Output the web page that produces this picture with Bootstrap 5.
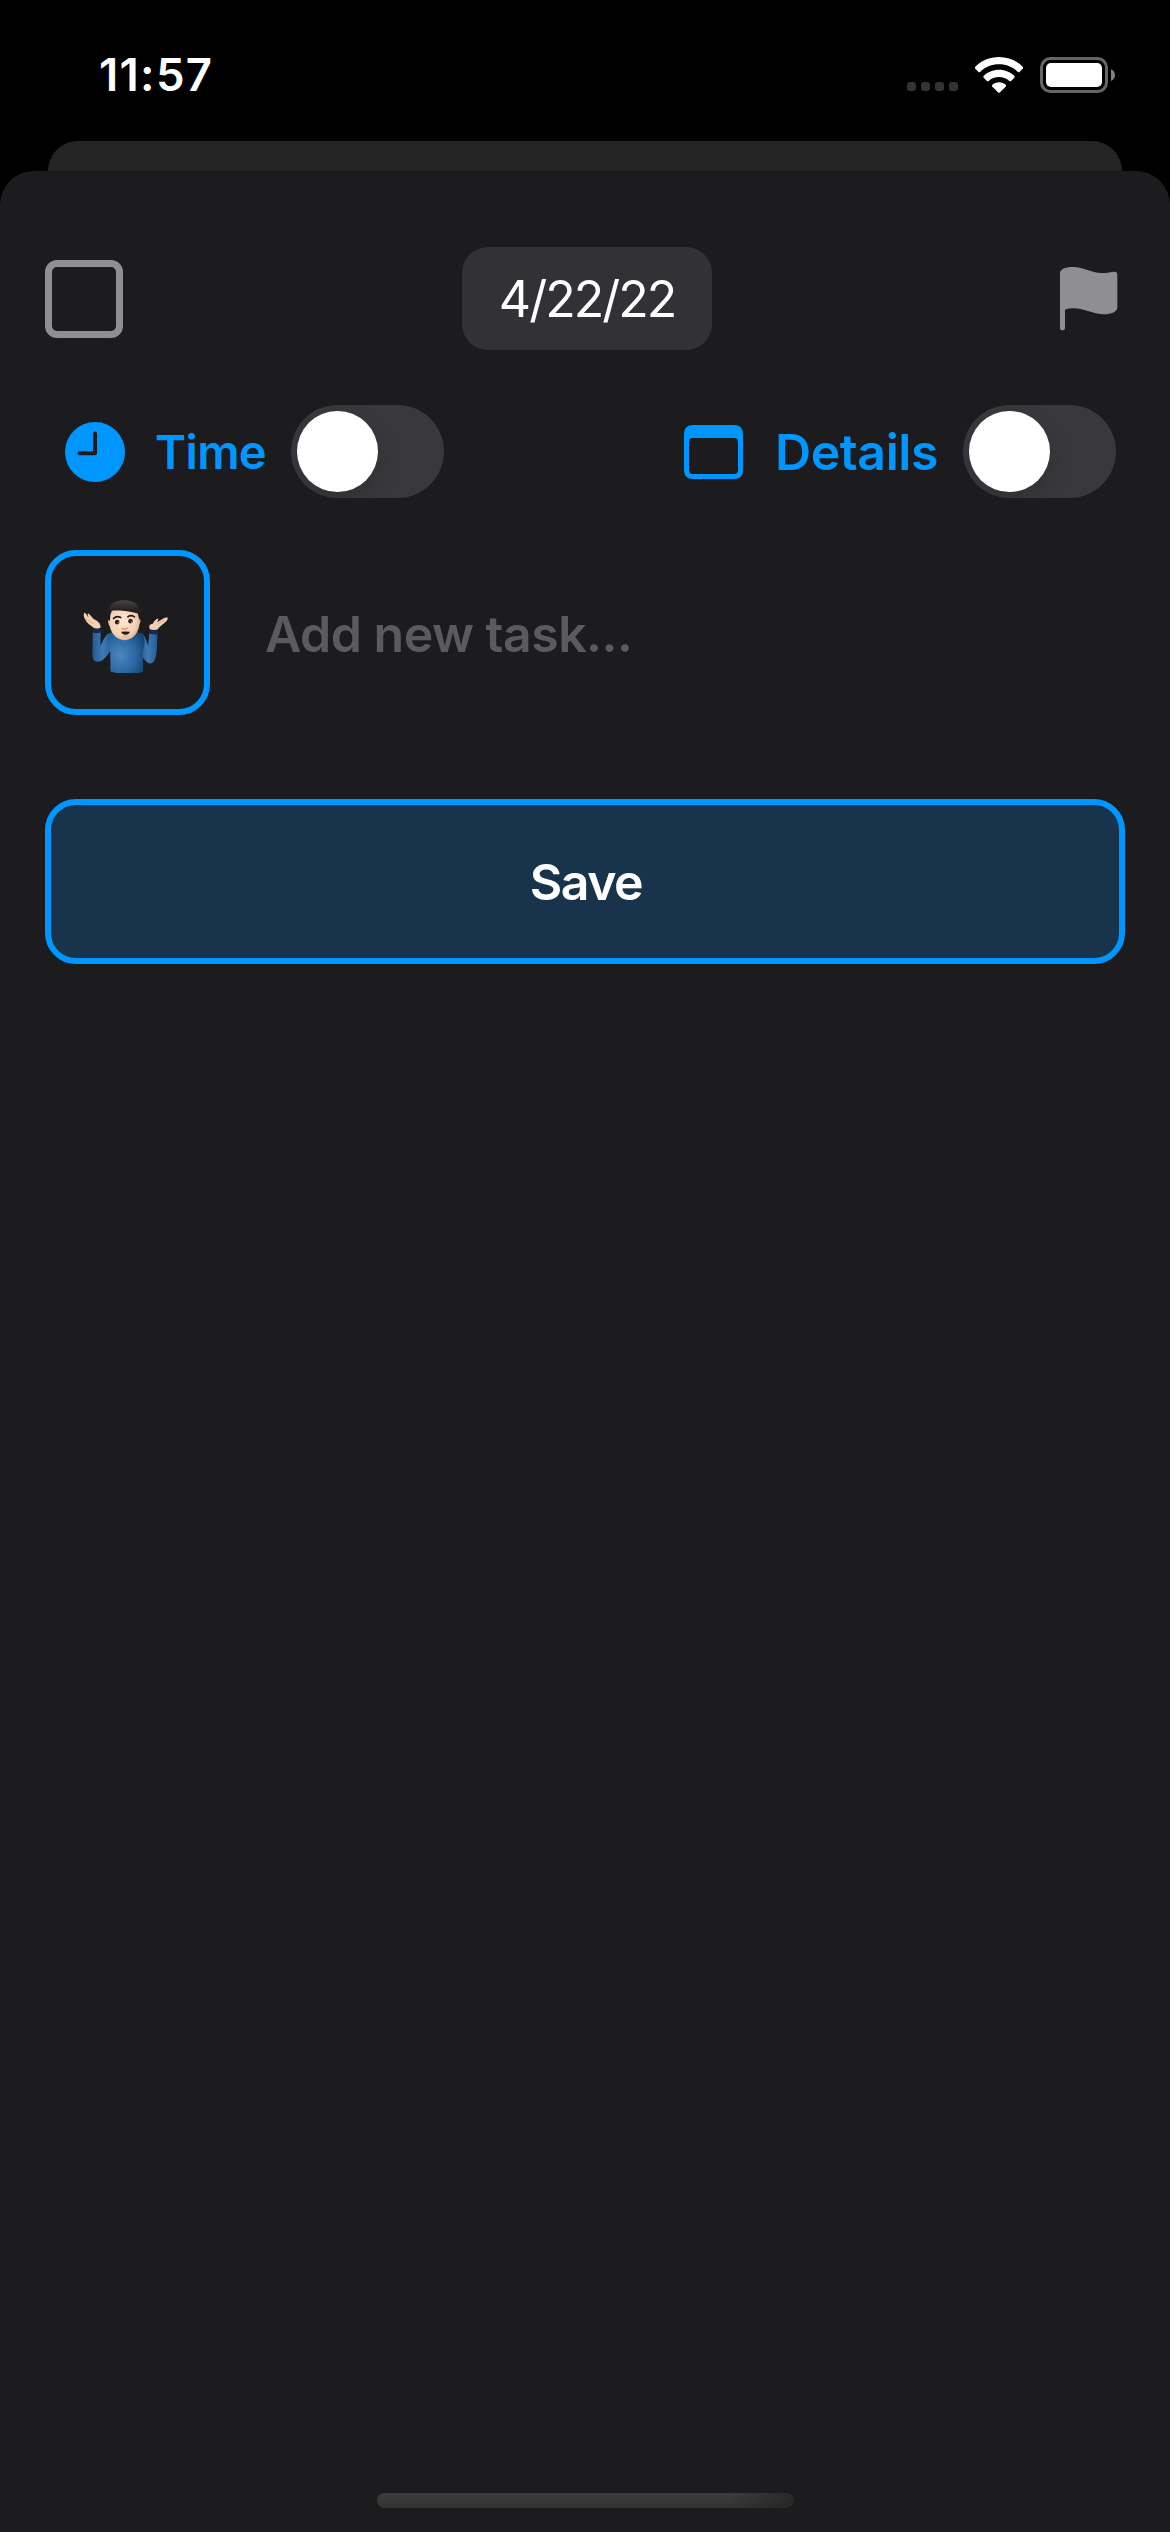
<!DOCTYPE html>
<html lang="en" data-bs-theme="dark">
<head>
<meta charset="utf-8">
<meta name="viewport" content="width=device-width, initial-scale=1">
<title>New task</title>
<link href="https://cdn.jsdelivr.net/npm/bootstrap@5.3.0/dist/css/bootstrap.min.css" rel="stylesheet">
<style>
  :root { --accent: #0096ff; --sheet: #1c1c1e; }
  body { height: 2532px; background: #000; color: #fff; font-family: Inter, "Liberation Sans", sans-serif; line-height: 1; overflow: hidden; }
  svg { display: block; flex: none; }
  .status-bar { height: 141px; padding: 8px 55px 0 99px; }
  .status-time { font-size: 45.5px; font-weight: 600; letter-spacing: 1.3px; }
  .signal-dot { width: 9px; height: 9px; border-radius: 3px; background: #333; }
  .signal { gap: 5px; margin: 24px 17px 0 0; }
  .back-sheet { height: 30px; margin: 0 48px; background: #242424; border-radius: 30px 30px 0 0; }
  .task-sheet { background: var(--sheet); border-radius: 34px 34px 0 0; padding: 76px 45px 24px; }
  .task-check { width: 78px; height: 78px; border: 7px solid #8e8e93; border-radius: 12px; background: none; }
  .date-pill { width: 250px; height: 103px; border-radius: 26px; background: #323236; font-size: 50px; letter-spacing: -2px; }
  .option-row { height: 93px; margin-top: 55px; padding: 0 9px 0 20px; color: var(--accent); font-weight: 600; }
  .time-text { font-size: 47px; margin-left: 30px; width: 136px; letter-spacing: -.6px; }
  .details-text { font-size: 50px; margin-left: 31px; width: 188px; letter-spacing: -.4px; }
  .toggle-track { width: 153px; height: 93px; padding: 6px; border-radius: 47px; background: #39393d; overflow: hidden; }
  .toggle-knob { width: 81px; height: 81px; border-radius: 50%; background: #fff; box-shadow: 0 9px 24px rgba(0,0,0,.15); }
  .entry-row { height: 165px; margin-top: 52px; }
  .emoji-box { width: 165px; height: 165px; border: 6px solid var(--accent); border-radius: 31px; }
  .task-input, .task-input:focus { background: none; border: 0; box-shadow: none; padding: 2px 0 0 55px; font-size: 50px; font-weight: 600; letter-spacing: -.5px; height: 100px; }
  .task-input::placeholder { color: #5b5b5f; opacity: 1; }
  .save-btn, .save-btn:hover { height: 165px; margin-top: 84px; padding: 0 0 0 2px; border: 6px solid var(--accent); border-radius: 31px; background: #17344c; color: #fff; font-size: 50px; font-weight: 600; letter-spacing: -1.5px; line-height: 1; }
  .home-bar { width: 417px; height: 15px; border-radius: 8px; background: linear-gradient(100deg, transparent 84%, rgba(28,28,30,.6)), linear-gradient(#3d3d3d, #333); }
</style>
<script src="https://cdn.jsdelivr.net/npm/bootstrap@5.3.0/dist/js/bootstrap.bundle.min.js"></script>
</head>
<body class="d-flex flex-column m-0">
  <header class="status-bar d-flex align-items-center justify-content-between">
    <div class="status-time">11:57</div>
    <div class="d-flex align-items-center">
      <div class="signal d-flex"><span class="signal-dot"></span><span class="signal-dot"></span><span class="signal-dot"></span><span class="signal-dot"></span></div>
      <svg width="48" height="36" viewBox="0 0 144 108" fill="#fff">
        <path d="M72 0C100 0 125 11 143 29Q146 32 143 35L134 44Q131 47 128 44C113 30 94 22 72 22S31 30 16 44Q13 47 10 44L1 35Q-2 32 1 29C19 11 44 0 72 0Z"/>
        <path d="M72 38C90 38 106 45 118 56Q120 59 118 62L109 71Q106 74 102 71C94 64 84 60 72 60S50 64 42 71Q38 74 35 71L26 62Q24 59 26 56C38 45 54 38 72 38Z"/>
        <path d="M72 76C80 76 87 79 92 83Q94 86 92 89L75 106Q72 109 69 106L52 89Q50 86 52 83C57 79 64 76 72 76Z"/>
      </svg>
      <svg class="ms-3" width="76" height="36" viewBox="0 0 76 36">
        <rect x="2.500" y="1.500" width="65" height="33" rx="9" fill="none" stroke="#666" stroke-width="3"/>
        <rect x="7" y="6" width="56" height="24" rx="5" fill="#fff"/>
        <path d="M72 12Q76 14 76 18T72 24Z" fill="#808080"/>
      </svg>
    </div>
  </header>
  <div class="back-sheet"></div>
  <main class="task-sheet d-flex flex-column flex-grow-1">
    <div class="d-flex align-items-center justify-content-between">
      <button class="task-check p-0" aria-label="Done"></button>
      <div class="date-pill d-flex align-items-center justify-content-center">4/22/22</div>
      <svg width="74" height="66" viewBox="0 0 222 198" fill="#8e8e93">
        <path d="M27 21C27 8 47 3 67 3C99 3 121 21 151 21C169 21 180 17 191 17Q199 17 199 27V124C199 138 181 145 159 145C124 145 103 127 67 127Q50 127 42 131V185Q42 193 34.500 193T27 185Z"/>
      </svg>
    </div>
    <div class="option-row d-flex align-items-center justify-content-between">
      <div class="d-flex align-items-center">
        <svg width="60" height="60" viewBox="0 0 60 60"><circle cx="30" cy="30" r="30" fill="#0096ff"/><path d="M30 11.500V31.200H14.500" fill="none" stroke="#1c1c1e" stroke-width="4" stroke-linecap="round" stroke-linejoin="round"/></svg>
        <span class="time-text">Time</span>
        <div class="toggle-track" role="switch" aria-checked="false"><div class="toggle-knob"></div></div>
      </div>
      <div class="d-flex align-items-center">
        <svg width="60" height="54" viewBox="0 0 60 54"><path fill="#0096ff" fill-rule="evenodd" d="M9 0H50Q59 0 59 9V45Q59 54 50 54H9Q0 54 0 45V9Q0 0 9 0ZM9 13Q5 13 5 17V45Q5 49 9 49H50Q54 49 54 45V17Q54 13 50 13Z"/></svg>
        <span class="details-text">Details</span>
        <div class="toggle-track" role="switch" aria-checked="false"><div class="toggle-knob"></div></div>
      </div>
    </div>
    <div class="entry-row d-flex align-items-center">
      <div class="emoji-box d-flex align-items-center justify-content-center flex-shrink-0">
        <svg width="100" height="80" viewBox="142.500 187.500 300 240">
          <defs>
            <radialGradient id="shirt" cx=".35" cy=".55" r=".75"><stop offset="0" stop-color="#4c86c0"/><stop offset=".55" stop-color="#2c68a5"/><stop offset="1" stop-color="#153f6b"/></radialGradient>
            <linearGradient id="sleeve" x1="0" x2="1"><stop offset="0" stop-color="#24598f"/><stop offset=".5" stop-color="#3e7ab5"/><stop offset="1" stop-color="#245a92"/></linearGradient>
            <radialGradient id="face" cx=".45" cy=".45" r=".65"><stop offset="0" stop-color="#ffe6d0"/><stop offset=".7" stop-color="#f3d0b3"/><stop offset="1" stop-color="#c89876"/></radialGradient>
            <linearGradient id="hair" x1="0" y1="0" x2="0" y2="1"><stop offset="0" stop-color="#4b4344"/><stop offset=".5" stop-color="#231f20"/><stop offset="1" stop-color="#100e0f"/></linearGradient>
          </defs>
          <path d="M187 302L210 302L210 346C218 330 224 314 238 307L248 350C235 368 220 394 201 394C186 394 185 378 186 358Z" fill="url(#sleeve)"/>
          <path d="M381 307L357 307L353 346C347 330 344 314 331 307L325 350C330 372 345 399 360 399C373 398 377 380 379 358Z" fill="url(#sleeve)"/>
          <path d="M236 308C250 302 320 302 334 308C347 325 341 350 337 366L338 424Q290 439 240 423L239 366C231 345 224 325 236 308Z" fill="url(#shirt)"/>
          <path d="M188 293L210 292V306Q199 309 187 306ZM357 297L381 298V312Q369 313 356 310Z" fill="#172b51"/>
          <path d="M189 292C180 284 168 278 165 268C160 262 158 251 162 247C167 247 169 256 174 261C172 254 169 248 174 249C180 254 184 261 190 266C201 270 212 279 210 292Q200 296 189 292Z" fill="#f3d1b2"/>
          <path d="M358 296C354 286 358 281 367 280C370 272 377 265 383 264C385 268 380 272 381 275C388 270 398 262 410 260C414 264 410 270 404 275C398 281 389 285 381 297Q369 300 358 296Z" fill="#f3d1b2"/>
          <path d="M167 267Q178 270 188 281M403 268L382 281" fill="none" stroke="#c99b78" stroke-width="2"/>
          <path d="M236 262Q229 266 235 283L242 293H319L328 278Q333 266 325 263Z" fill="#e5b995"/>
          <path d="M237 236C243 223 320 222 327 240V276C327 306 307 329 283 329C257 329 237 306 237 276Z" fill="url(#face)"/>
          <path d="M234 271C228 236 235 209 282 209C323 209 334 235 327 270L322 249C306 243 262 237 244 241Q238 252 238 271Z" fill="url(#hair)"/>
          <path d="M249 264Q258 254 271 261M292 259Q301 252 312 259" fill="none" stroke="#251b19" stroke-width="5" stroke-linecap="round"/>
          <ellipse cx="261" cy="275" rx="10" ry="7" fill="#fff7ec"/><ellipse cx="301" cy="272" rx="10" ry="7" fill="#fff7ec"/>
          <circle cx="260" cy="275" r="7" fill="#3b210d"/><circle cx="300" cy="272" r="7" fill="#3b210d"/>
          <circle cx="264" cy="277" r="2.500" fill="#b98632"/><circle cx="304" cy="275" r="2.500" fill="#b98632"/>
          <path d="M275 294Q283 300 291 293" fill="none" stroke="#e09c84" stroke-width="5" stroke-linecap="round"/>
          <path d="M272 304Q284 302 298 304Q296 313 285 313Q274 312 272 304Z" fill="#2a1715"/>
          <path d="M277 317H291" stroke="#e1a58d" stroke-width="3" stroke-linecap="round"/>
        </svg>
      </div>
      <input class="form-control task-input" type="text" placeholder="Add new task...">
    </div>
    <button class="save-btn btn w-100">Save</button>
    <div class="home-bar mt-auto align-self-center"></div>
  </main>
</body>
</html>
